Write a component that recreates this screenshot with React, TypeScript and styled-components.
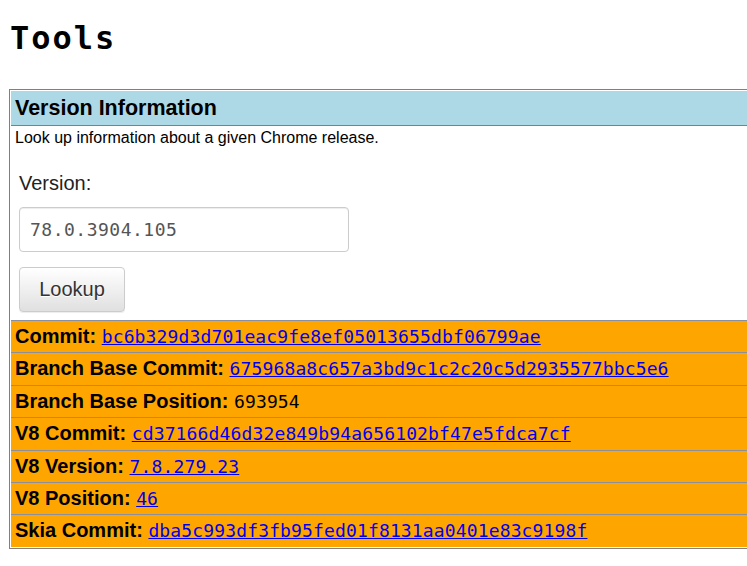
import React from "react";
import styled, { createGlobalStyle } from "styled-components";

const GlobalStyle = createGlobalStyle`
  html {
    overflow: hidden;
  }
  body {
    margin: 8px 0 8px 8px;
    background: #ffffff;
    color: #000000;
    font-family: "Liberation Sans", Arial, sans-serif;
  }
`;

const Page = styled.div`
  overflow: hidden;
`;

const Title = styled.h1`
  margin: 12px 0 32px 2px;
  font-family: "DejaVu Sans Mono", monospace;
  font-size: 32px;
  font-weight: bold;
  letter-spacing: 2px;
  line-height: 37px;
`;

const Panel = styled.div`
  width: 770px;
  margin-left: 1px;
  border: 1px solid #808080;
  padding: 1px;
`;

const Header = styled.div`
  background: #add8e6;
  padding: 0 4px;
  font-size: 21.5px;
  font-weight: bold;
  line-height: 34px;
`;

const Intro = styled.div`
  border-top: 1px solid #808080;
  padding: 3px 4px 8px;
`;

const Description = styled.p`
  margin: 0;
  font-size: 16px;
  line-height: 18px;
`;

const Form = styled.div`
  display: flex;
  flex-direction: column;
  align-items: flex-start;
  padding: 25px 4px 0;
`;

const FieldLabel = styled.label`
  font-size: 20px;
  line-height: 23px;
  color: #222;
`;

const VersionInput = styled.input`
  box-sizing: border-box;
  width: 330px;
  height: 45px;
  margin-top: 12px;
  padding: 0 10px;
  border: 1px solid #cccccc;
  border-radius: 4px;
  box-shadow: inset 0 1px 1px rgba(0, 0, 0, 0.075);
  font-family: "DejaVu Sans Mono", monospace;
  font-size: 18px;
  letter-spacing: 0.5px;
  color: #555555;
  outline: none;
`;

const LookupButton = styled.button`
  box-sizing: border-box;
  width: 106px;
  height: 45px;
  margin-top: 15px;
  padding: 0;
  border: 1px solid #cccccc;
  border-radius: 4px;
  background: linear-gradient(to bottom, #ffffff 0%, #e0e0e0 100%);
  box-shadow: inset 0 1px 0 rgba(255, 255, 255, 0.15),
    0 1px 1px rgba(0, 0, 0, 0.075);
  text-shadow: 0 1px 0 #fff;
  font-family: "Liberation Sans", Arial, sans-serif;
  font-size: 20px;
  color: #333333;
`;

const Row = styled.div`
  height: 31.4px;
  line-height: 31.4px;
  padding: 0 4px;
  background: #ffa500;
  border-top: 1px solid #8a8fa0;
  font-size: 20px;
  white-space: nowrap;
`;

const RowLabel = styled.b`
  font-weight: bold;
`;

const Mono = styled.span`
  font-family: "DejaVu Sans Mono", monospace;
  font-size: 18px;
  letter-spacing: 0.14px;
`;

const HashLink = styled(Mono).attrs({ as: "a" })`
  color: #0000ee;
  text-decoration: underline;
`;

const rows = [
  { label: "Commit", value: "bc6b329d3d701eac9fe8ef05013655dbf06799ae", link: true },
  { label: "Branch Base Commit", value: "675968a8c657a3bd9c1c2c20c5d2935577bbc5e6", link: true },
  { label: "Branch Base Position", value: "693954", link: false },
  { label: "V8 Commit", value: "cd37166d46d32e849b94a656102bf47e5fdca7cf", link: true },
  { label: "V8 Version", value: "7.8.279.23", link: true },
  { label: "V8 Position", value: "46", link: true },
  { label: "Skia Commit", value: "dba5c993df3fb95fed01f8131aa0401e83c9198f", link: true },
];

export default function App() {
  return (
    <Page>
      <GlobalStyle />
      <Title>Tools</Title>
      <Panel>
        <Header>Version Information</Header>
        <Intro>
          <Description>Look up information about a given Chrome release.</Description>
          <Form>
            <FieldLabel htmlFor="version">Version:</FieldLabel>
            <VersionInput id="version" defaultValue="78.0.3904.105" />
            <LookupButton>Lookup</LookupButton>
          </Form>
        </Intro>
        {rows.map((r) => (
          <Row key={r.label}>
            <RowLabel>{r.label}:</RowLabel>{" "}
            {r.link ? <HashLink href="#">{r.value}</HashLink> : <Mono>{r.value}</Mono>}
          </Row>
        ))}
      </Panel>
    </Page>
  );
}
